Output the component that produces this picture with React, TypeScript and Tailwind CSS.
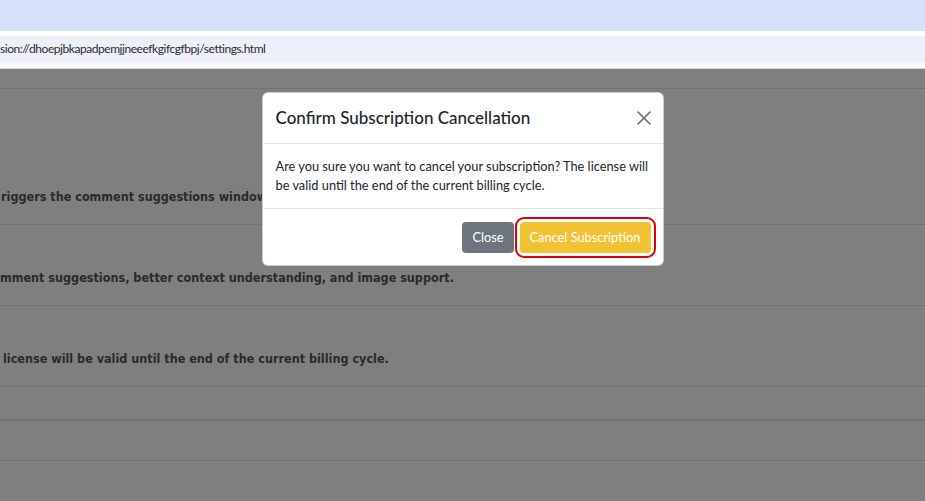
const rows = [
  {
    h: "h-[136px]",
    text: "riggers the comment suggestions window when you start typing.",
    pl: "pl-px",
  },
  {
    h: "h-[81px]",
    text: "mment suggestions, better context understanding, and image support.",
    pl: "pl-0",
  },
  {
    h: "h-[81px]",
    text: "license will be valid until the end of the current billing cycle.",
    pl: "pl-[3px]",
  },
];

const CloseIcon = () => (
  <svg width="14" height="14" viewBox="0 0 14 14" fill="none">
    <path
      d="M1 1L13 13M13 1L1 13"
      stroke="#6b6b6b"
      strokeWidth="1.6"
      strokeLinecap="round"
    />
  </svg>
);

const App = () => {
  return (
    <div className="w-[925px] h-[501px] flex flex-col overflow-hidden bg-white font-['Lato',sans-serif]">
      {/* browser chrome */}
      <div className="h-[31px] bg-[#d6e2fb]" />
      <div className="h-[5px] bg-white" />
      <div className="h-[26px] bg-[#edf0f9] flex items-center">
        <span className="text-[12px] text-[#2b2b2b] tracking-[-0.45px]">
          sion://dhoepjbkapadpemjjneeefkgifcgfbpj/settings.html
        </span>
      </div>
      <div className="h-[6px] bg-[#f7f8fc]" />

      {/* settings page behind the modal */}
      <div className="relative flex-1 border-t border-[#d8d8d8]">
        <div className="h-[20px] border-b border-[#e6e6e6]" />
        {rows.map((row) => (
          <div
            key={row.text}
            className={`${row.h} flex items-end pb-[17px] border-b border-[#e6e6e6] ${row.pl}`}
          >
            <p className="font-['DejaVu_Sans_Condensed','DejaVu_Sans',sans-serif] font-bold text-[12.5px] leading-[20px] text-[#555] whitespace-nowrap">
              {row.text}
            </p>
          </div>
        ))}
        <div className="h-[34px] border-b-2 border-[#e2e2e2]" />
        <div className="h-[40px] border-b border-[#e6e6e6]" />

        {/* overlay */}
        <div className="absolute inset-0 bg-black/50">
          <div className="mx-auto mt-[23px] w-[402px] bg-white rounded-[6px] border border-black/20">
            <div className="flex items-center justify-between px-[13px] py-[13px] border-b border-[#dee2e6]">
              <h5 className="text-[17px] leading-[24px] font-medium text-[#212529]">
                Confirm Subscription Cancellation
              </h5>
              <button className="mr-[-1px]">
                <CloseIcon />
              </button>
            </div>
            <div className="p-[13px] text-[12.8px] leading-[19.2px] text-[#212529]">
              Are you sure you want to cancel your subscription? The license will
              be valid until the end of the current billing cycle.
            </div>
            <div className="flex justify-end items-center gap-[6px] px-[12px] pt-[13px] pb-[12px] border-t border-[#dee2e6]">
              <button className="h-[31px] px-[10px] rounded-[4px] bg-[#6c757d] text-white text-[12.8px]">
                Close
              </button>
              <button className="h-[31px] px-[10px] rounded-[4px] bg-[#f1c232] text-white text-[12.8px] outline-2 outline-offset-[3px] outline-[#e00000]">
                Cancel Subscription
              </button>
            </div>
          </div>
        </div>
      </div>
    </div>
  );
};

export default App;
